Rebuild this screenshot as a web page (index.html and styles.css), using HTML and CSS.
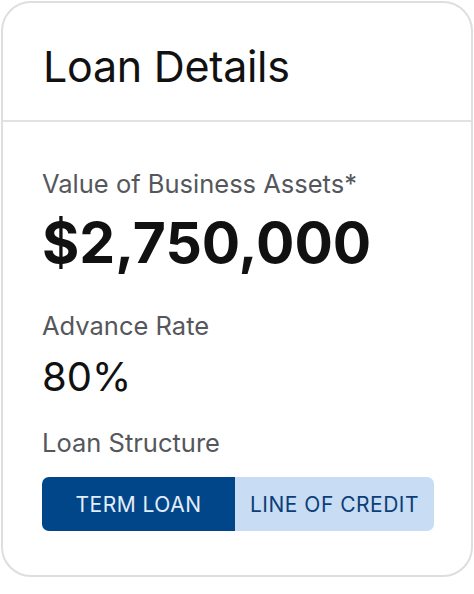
FILE: index.html
```html
<!DOCTYPE html>
<html>
    <head>
        <title>Loan Details</title>
        <link rel="stylesheet" href="styles.css">
    </head>
    <body>
        <div class="card">
            <div class="card__header">
                <h1 class="card__title">Loan Details</h1>
            </div>
            <div class="card__body">
                <div class="field field--assets">
                    <div class="field__label">Value of Business Assets*</div>
                    <div class="field__value field__value--big">$2,750,000</div>
                </div>
                <div class="field field--rate">
                    <div class="field__label">Advance Rate</div>
                    <div class="field__value">80%</div>
                </div>
                <div class="field">
                    <div class="field__label">Loan Structure</div>
                    <div class="toggle">
                        <button class="toggle__option toggle__option--term active">TERM LOAN</button>
                        <button class="toggle__option">LINE OF CREDIT</button>
                    </div>
                </div>
            </div>
        </div>
    </body>
</html>
```

FILE: styles.css
```css
* {
  box-sizing: border-box;
  margin: 0;
  padding: 0;
}

body {
  font-family: Inter, "Noto Sans", sans-serif;
  background-color: #fff;
  color: #111;
}

.card {
  width: 472px;
  height: 576px;
  margin: 1px 0 0 1px;
  border: 2px solid #dedede;
  border-radius: 30px;
  background-color: #fff;
}

.card__header {
  height: 119px;
  padding: 37px 0 0 40px;
  border-bottom: 2px solid #e2e2e2;
}

.card__title {
  font-size: 43px;
  font-weight: 400;
  line-height: 52px;
  letter-spacing: -0.3px;
}

.card__body {
  padding: 47px 37px 0 39px;
}

.field--assets {
  margin-bottom: 36px;
}

.field--rate {
  margin-bottom: 27px;
}

.field__label {
  font-size: 25.5px;
  line-height: 30px;
  color: #55575c;
}

.field__value {
  font-size: 40px;
  line-height: 48px;
  margin-top: 12px;
}

.field__value--big {
  font-size: 57px;
  font-weight: 700;
  line-height: 64px;
  letter-spacing: 0;
}

.toggle {
  display: flex;
  margin-top: 19px;
  height: 54px;
  border-radius: 7px;
  overflow: hidden;
}

.toggle__option {
  flex: 1;
  border: none;
  font-family: inherit;
  font-size: 21px;
  letter-spacing: 0.5px;
  background-color: #c8dcf3;
  color: #0c3e78;
}

.toggle__option--term {
  flex: 0 0 193px;
}

.toggle__option.active {
  background-color: #02468a;
  color: #e4eefa;
}
```
